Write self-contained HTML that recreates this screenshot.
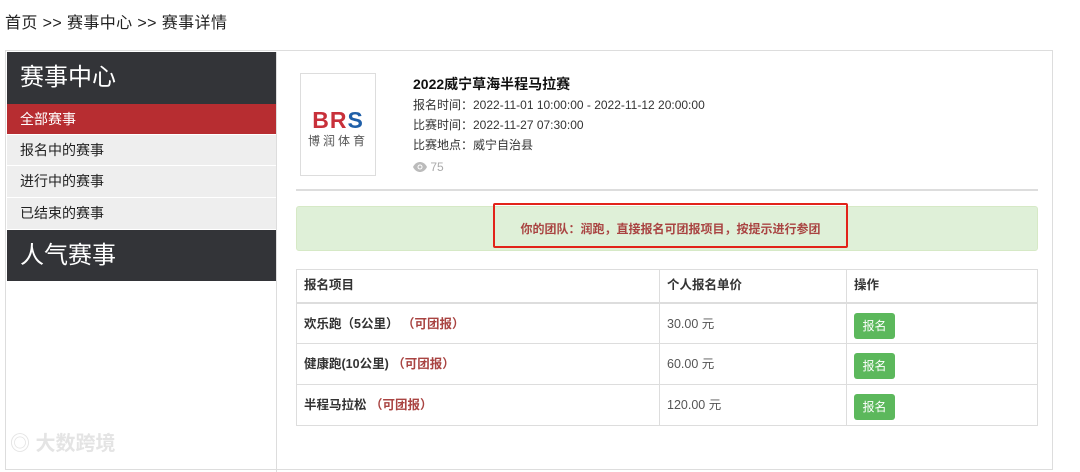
<!DOCTYPE html>
<html><head><meta charset="utf-8"><style>
*{margin:0;padding:0;box-sizing:border-box}
body{width:1080px;height:459px;overflow:hidden;background:#fff;font-family:"Liberation Sans","Noto Sans CJK SC",sans-serif;color:#333;position:relative}
.crumb{position:absolute;left:5px;top:9px;font-size:16px;color:#222;letter-spacing:0.4px}
.wrap{position:absolute;left:5px;top:50px;width:1048px;height:420px;border:1px solid #ddd}
.side{position:absolute;left:1px;top:1px;width:270px;height:420px;border-right:1px solid #ddd}
.h{background:#333438;color:#fff;font-size:24px;height:52px;line-height:52px;padding-left:13px}
.it{background:#eee;height:31px;line-height:30px;font-size:14px;padding-left:13px;border-bottom:1px solid #fff;color:#222}
.it.a{background:#b72d31;color:#fff}
.abs{position:absolute}
.logo{left:300px;top:73px;width:76px;height:103px;border:1px solid #ddd;background:#fff;text-align:center}
.info{left:413px;top:74px;font-size:12px;line-height:20px;color:#333}
.info b{font-size:14px;display:block;line-height:20px;margin-bottom:1px;color:#111}
.alert{left:296px;top:206px;width:742px;height:45px;background:#dff0d8;border:1px solid #d6e9c6;border-radius:3px}
.red{left:493px;top:203px;width:355px;height:45px;border:2px solid #e2231a;border-radius:2px;color:#a94442;font-size:12px;font-weight:bold;text-align:center;line-height:49px}
table{position:absolute;left:296px;top:269px;width:742px;border-collapse:collapse;font-size:12.5px}
td,th{border:1px solid #ddd;padding:0 7px;text-align:left;vertical-align:top}
th{height:33px;line-height:31px;border-bottom:2px solid #ddd;font-weight:bold;color:#333}
td{height:41px;padding-top:9px;color:#555}
td.n{font-weight:bold;color:#333}
.t{color:#a94442;font-weight:bold}
.btn{display:inline-block;background:#5cb85c;color:#fff;width:41px;height:26px;line-height:26px;text-align:center;border-radius:3px;font-size:12px}
</style></head><body>
<div class="crumb">首页 &gt;&gt; 赛事中心 &gt;&gt; 赛事详情</div>
<div class="wrap">
 <div class="side">
  <div class="h">赛事中心</div>
  <div class="it a">全部赛事</div>
  <div class="it">报名中的赛事</div>
  <div class="it" style="height:32px;line-height:31px">进行中的赛事</div>
  <div class="it" style="height:32px;line-height:31px">已结束的赛事</div>
  <div class="h" style="height:51px;line-height:51px">人气赛事</div>
 </div>
</div>
<div class="abs logo"><div style="margin-top:33px;font:bold 23px 'Liberation Sans',sans-serif;letter-spacing:1px"><span style="color:#c8303a">BR</span><span style="color:#1f5fa8">S</span></div><div style="font-size:12px;color:#555;letter-spacing:3px;line-height:14px">博润体育</div></div>
<div class="abs info"><b>2022威宁草海半程马拉赛</b>报名时间：2022-11-01 10:00:00 - 2022-11-12 20:00:00<br>比赛时间：2022-11-27 07:30:00<br>比赛地点：威宁自治县<br><span style="color:#aaa;font-size:12px;line-height:24px"><svg width="14" height="10" viewBox="0 0 14 10" style="vertical-align:-1px"><path d="M0 5C2 1 5 0 7 0s5 1 7 5c-2 4-5 5-7 5S2 9 0 5z" fill="#bbb"/><circle cx="7" cy="5" r="2.5" fill="#fff"/><circle cx="7" cy="5" r="1.5" fill="#bbb"/></svg> 75</span></div>
<div class="abs" style="left:296px;top:189px;width:742px;height:2px;background:#ddd"></div>
<div class="abs alert"></div>
<div class="abs red">你的团队：润跑，直接报名可团报项目，按提示进行参团</div>
<table>
<tr><th style="width:363px">报名项目</th><th style="width:187px">个人报名单价</th><th>操作</th></tr>
<tr><td class="n">欢乐跑（5公里） <span class="t">（可团报）</span></td><td>30.00 元</td><td><span class="btn">报名</span></td></tr>
<tr><td class="n">健康跑(10公里) <span class="t">（可团报）</span></td><td>60.00 元</td><td><span class="btn">报名</span></td></tr>
<tr><td class="n">半程马拉松 <span class="t">（可团报）</span></td><td>120.00 元</td><td><span class="btn">报名</span></td></tr>
</table>
<div class="abs" style="left:10px;top:427px;font-size:20px;color:#e4e4e4;font-weight:bold">◎ 大数跨境</div>
</body></html>
